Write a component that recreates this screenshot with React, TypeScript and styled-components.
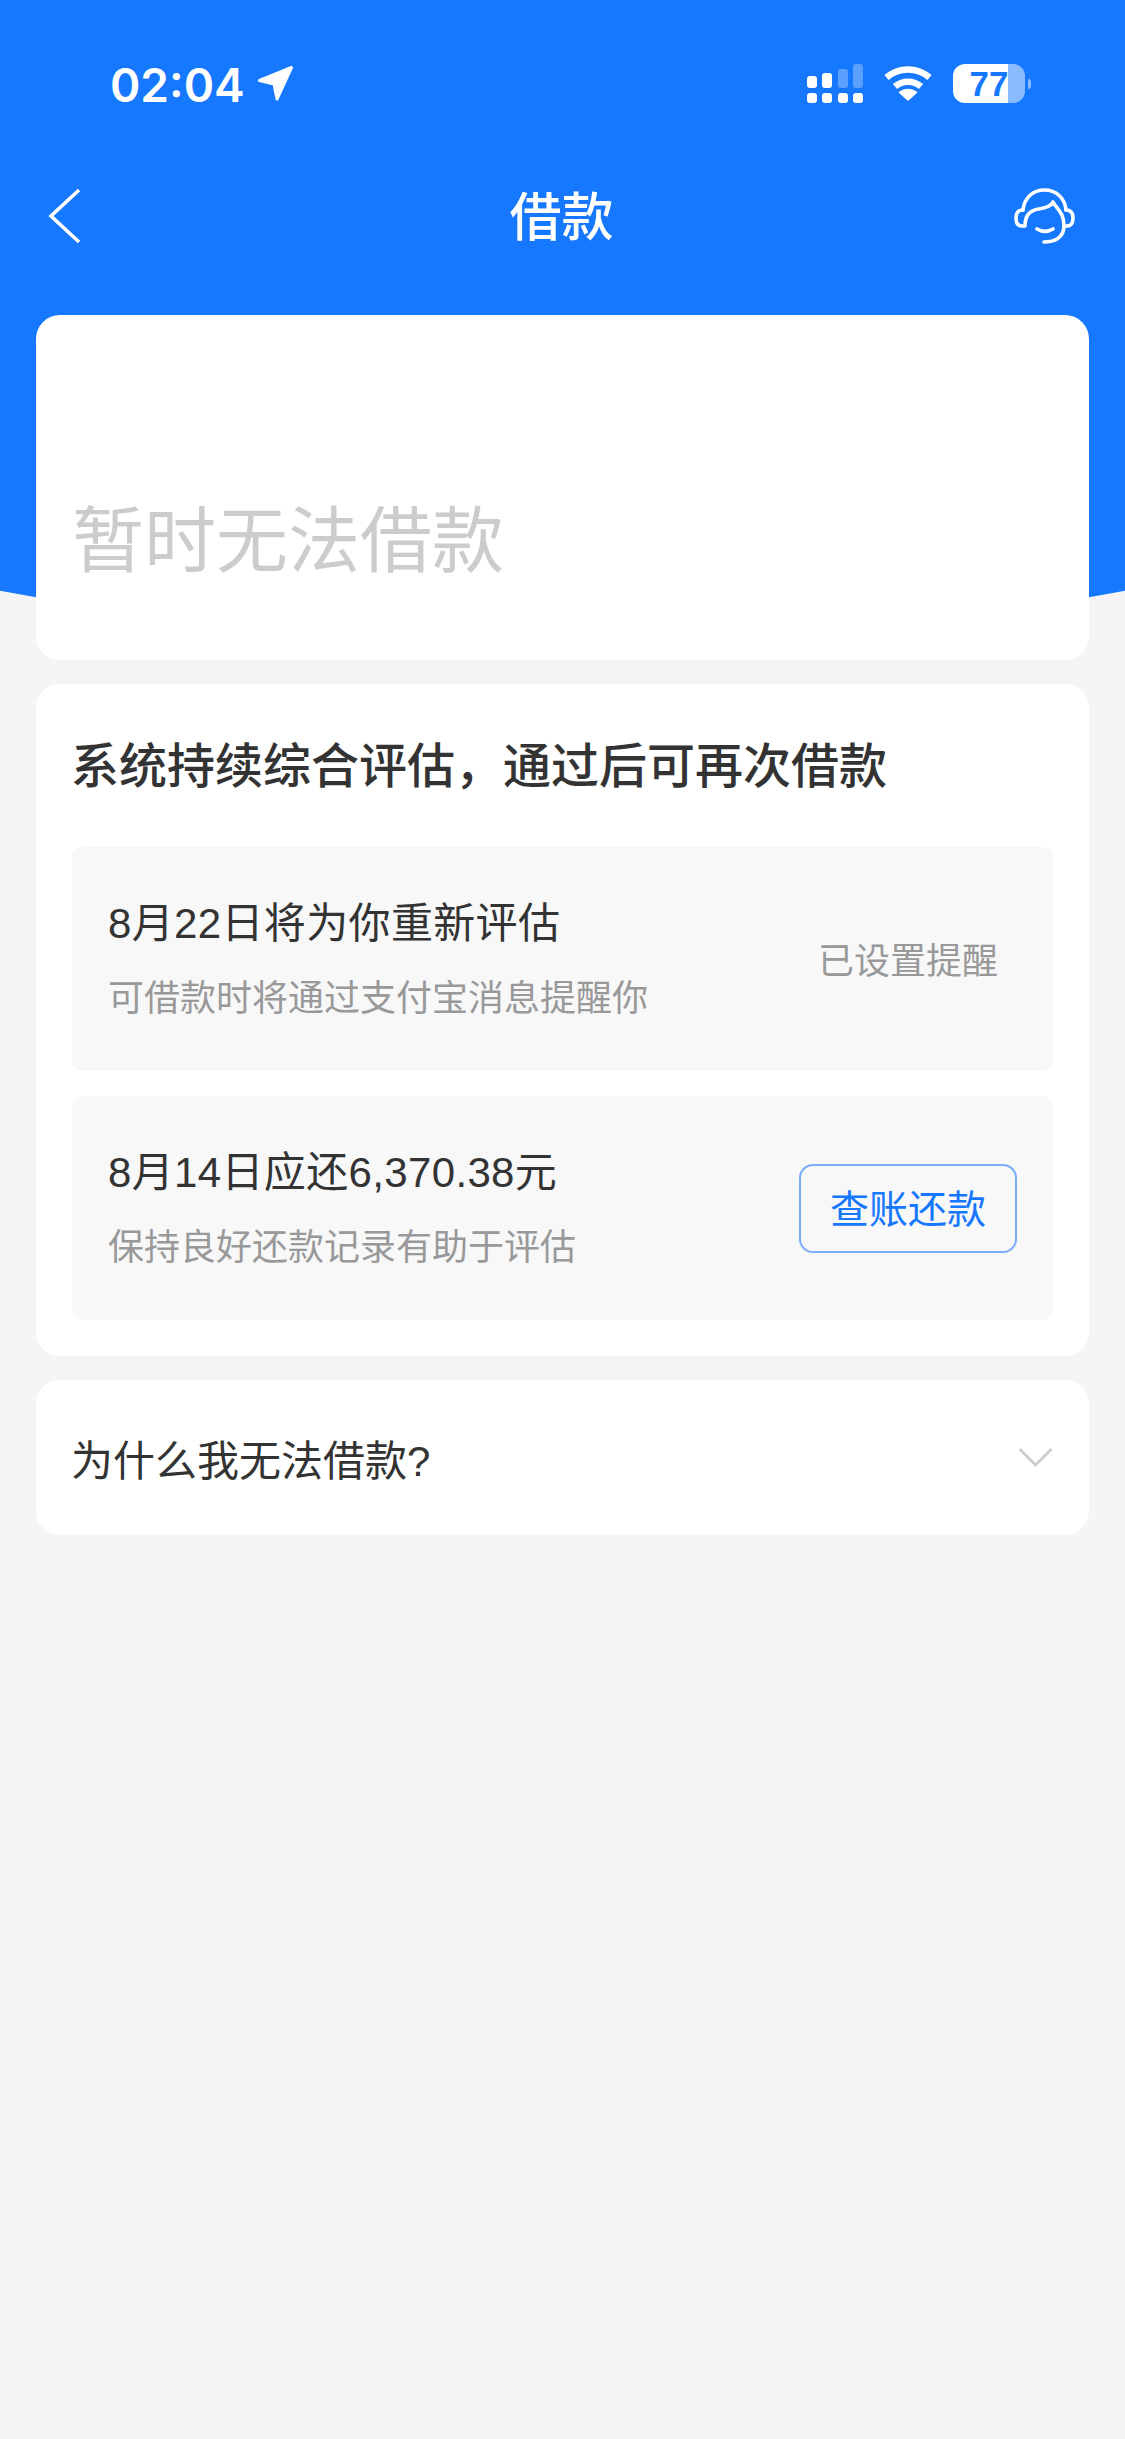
import styled, { createGlobalStyle } from 'styled-components';

const BLUE = '#1677ff';

const GlobalStyle = createGlobalStyle`
  html, body {
    margin: 0;
    padding: 0;
    background: #f5f5f8;
  }
  * {
    box-sizing: border-box;
  }
`;

const rows = [
  { title: '8月22日将为你重新评估', sub: '可借款时将通过支付宝消息提醒你', done: '已设置提醒' },
  { title: '8月14日应还6,370.38元', sub: '保持良好还款记录有助于评估', action: '查账还款' },
];

const signal = [12, 15, 19, 24];

const App = () => {
  return (
    <Page>
      <GlobalStyle />
      <Backdrop />
      <StatusBar>
        <TimeBox>
          <Time>02:04</Time>
          <svg width="37" height="37" viewBox="0 0 37 37">
            <path
              d="M2.5 15.5 L34.5 2.5 L20 34 L17 19 Z"
              fill="#fff"
              stroke="#fff"
              strokeWidth="3"
              strokeLinejoin="round"
            />
          </svg>
        </TimeBox>
        <StatusIcons>
          <Signal>
            {signal.map((h, i) => (
              <SignalCol key={h}>
                <SignalDot $height={h} $dim={i > 1} />
                <SignalDot $height={10} />
              </SignalCol>
            ))}
          </Signal>
          <svg width="48" height="35" viewBox="0 0 48 35">
            <g fill="none" stroke="#fff" strokeWidth="6.5">
              <path d="M2.5 11.5 A33 33 0 0 1 45.5 11.5" />
              <path d="M11 20.5 A20 20 0 0 1 37 20.5" />
            </g>
            <path d="M24 35 L14.5 26.5 A14 14 0 0 1 33.5 26.5 Z" fill="#fff" />
          </svg>
          <Battery>
            <BatteryBody $level={77}>77</BatteryBody>
            <BatteryTip />
          </Battery>
        </StatusIcons>
      </StatusBar>

      <NavBar>
        <svg width="33" height="56" viewBox="0 0 33 56">
          <path d="M31 2 L3 28 L31 54" fill="none" stroke="#fff" strokeWidth="3.6" />
        </svg>
        <NavTitle>借款</NavTitle>
        <NavRight>
          <svg width="61" height="56" viewBox="0 0 61 56">
            <g fill="none" stroke="#fff" strokeWidth="3.6" strokeLinecap="round" strokeLinejoin="round">
              <path d="M9 22 C10 10 19 2 30.5 2 C42 2 51 10 52 22" />
              <path d="M9 22 C4 22 2 25 2 30 C2 35 4 38 8 38 L11 38 C11 27 17 22 25 21 C32 20 37 18 39 14 C42 20 50 24 50 38 L53 38 C57 38 59 35 59 30 C59 25 57 22 52 22" />
              <path d="M23 41 C28 44 34 44 39 41" />
              <path d="M30 54 C40 54 50 50 50 38" />
            </g>
          </svg>
        </NavRight>
      </NavBar>

      <Content>
        <HeroCard>
          <HeroText>暂时无法借款</HeroText>
        </HeroCard>

        <InfoCard>
          <Heading>系统持续综合评估，通过后可再次借款</Heading>
          <RowList>
            {rows.map((row) => (
              <Row key={row.title}>
                <RowText>
                  <RowTitle>{row.title}</RowTitle>
                  <RowSub>{row.sub}</RowSub>
                </RowText>
                {row.done && <DoneLabel>{row.done}</DoneLabel>}
                {row.action && <ActionButton>{row.action}</ActionButton>}
              </Row>
            ))}
          </RowList>
        </InfoCard>

        <FaqCard>
          <FaqText>为什么我无法借款?</FaqText>
          <svg width="35" height="21" viewBox="0 0 35 21">
            <path d="M1.5 2 L17.5 18 L33.5 2" fill="none" stroke="#cccccc" strokeWidth="2.8" />
          </svg>
        </FaqCard>
      </Content>
    </Page>
  );
};

export default App;

const Page = styled.div`
  position: relative;
  width: 1125px;
  min-height: 2439px;
  overflow: hidden;
  background: #f5f5f8;
  font-family: 'Liberation Sans', 'Noto Sans CJK SC', sans-serif;
  color: #333;
`;

const Backdrop = styled.div`
  position: absolute;
  top: 0;
  left: 0;
  width: 100%;
  height: 660px;
  background: ${BLUE};
  clip-path: circle(3000px at 50% -2356px);
`;

const StatusBar = styled.div`
  position: relative;
  height: 156px;
  padding: 64px 94px 0 110px;
  display: flex;
  justify-content: space-between;
  align-items: flex-start;
`;

const TimeBox = styled.div`
  display: flex;
  align-items: center;
  gap: 12px;
  height: 39px;
`;

const Time = styled.span`
  font-family: Inter, sans-serif;
  font-size: 46px;
  font-weight: 600;
  line-height: 42px;
  padding-top: 3px;
  color: #fff;
`;

const StatusIcons = styled.div`
  display: flex;
  align-items: center;
  gap: 21px;
  height: 39px;
`;

const Signal = styled.div`
  display: flex;
  align-items: flex-end;
  gap: 5.33px;
  height: 39px;
`;

const SignalCol = styled.div`
  display: flex;
  flex-direction: column;
  gap: 5px;
`;

const SignalDot = styled.div<{ $height: number; $dim?: boolean }>`
  width: 10px;
  height: ${(p) => p.$height}px;
  border-radius: 3px;
  background: ${(p) => (p.$dim ? 'rgba(255, 255, 255, 0.3)' : '#fff')};
`;

const Battery = styled.div`
  display: flex;
  align-items: center;
  gap: 3px;
`;

const BatteryBody = styled.div<{ $level: number }>`
  width: 72px;
  height: 39px;
  border-radius: 12px;
  display: flex;
  align-items: center;
  justify-content: center;
  font-size: 35px;
  font-weight: 700;
  color: ${BLUE};
  background: linear-gradient(
    90deg,
    #fff ${(p) => p.$level}%,
    rgba(255, 255, 255, 0.5) ${(p) => p.$level}%
  );
`;

const BatteryTip = styled.div`
  width: 3px;
  height: 10px;
  border-radius: 0 3px 3px 0;
  background: rgba(255, 255, 255, 0.5);
`;

const NavBar = styled.div`
  position: relative;
  height: 120px;
  padding: 0 50px 0 48px;
  display: grid;
  grid-template-columns: 1fr auto 1fr;
  align-items: center;
`;

const NavRight = styled.div`
  display: flex;
  justify-content: flex-end;
`;

const NavTitle = styled.div`
  font-size: 52px;
  font-weight: 500;
  color: #fff;
  line-height: 60px;
  padding-top: 4px;
`;

const Content = styled.div`
  position: relative;
  padding: 39px 36px 0;
  display: flex;
  flex-direction: column;
  gap: 24px;
`;

const Card = styled.div`
  background: #fff;
  border-radius: 24px;
`;

const HeroCard = styled(Card)`
  height: 345px;
  padding: 0 36px 69px;
  display: flex;
  align-items: flex-end;
`;

const HeroText = styled.div`
  font-size: 72px;
  line-height: 100px;
  color: #cccccc;
`;

const InfoCard = styled(Card)`
  height: 672px;
  padding: 47px 36px 36px;
  display: flex;
  flex-direction: column;
`;

const Heading = styled.div`
  font-size: 48px;
  font-weight: 500;
  line-height: 72px;
  margin: 0 0 44px -1px;
  color: #333;
`;

const RowList = styled.div`
  display: flex;
  flex-direction: column;
  gap: 25px;
`;

const Row = styled.div`
  height: 224px;
  padding: 2px 36px 0;
  border-radius: 10px;
  background: #f8f8f9;
  display: flex;
  align-items: center;
  justify-content: space-between;
`;

const RowText = styled.div`
  display: flex;
  flex-direction: column;
  gap: 22px;
`;

const RowTitle = styled.div`
  font-size: 42px;
  line-height: 56px;
  letter-spacing: 0.35px;
  color: #333;
`;

const RowSub = styled.div`
  font-size: 36px;
  line-height: 50px;
  color: #999;
`;

const DoneLabel = styled.div`
  font-size: 36px;
  color: #999;
  margin: 0 19px 5px 0;
`;

const ActionButton = styled.button`
  width: 218px;
  height: 89px;
  padding: 0 0 4px;
  margin-bottom: 2px;
  border: 2px solid #7aaefa;
  border-radius: 14px;
  background: transparent;
  font-family: inherit;
  font-size: 39px;
  color: ${BLUE};
`;

const FaqCard = styled(Card)`
  height: 155px;
  padding: 0 36px;
  display: flex;
  align-items: center;
  justify-content: space-between;
`;

const FaqText = styled.div`
  font-size: 42px;
  margin-left: -1px;
  color: #333;
`;
